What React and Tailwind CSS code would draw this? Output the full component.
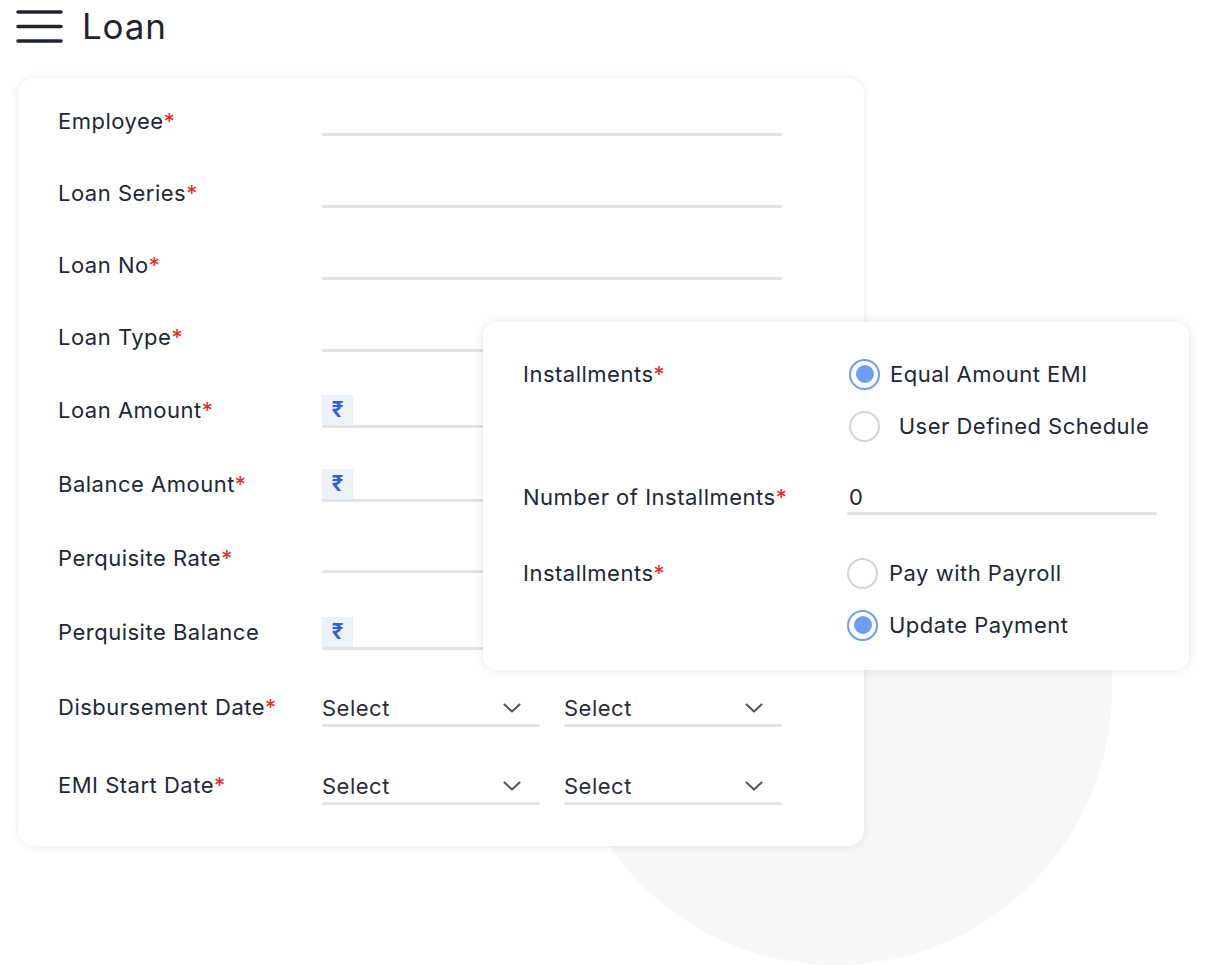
import React from 'react';

const font = { fontFamily: 'Inter, "Open Sans", sans-serif' };

const Star = () => <span className="text-[#e5251f]">*</span>;

const Chevron = () => (
    <svg width="18" height="10" viewBox="0 0 18 10" fill="none" className="text-[#555]">
        <path d="M1.5 1.5L9 8.5L16.5 1.5" stroke="currentColor" strokeWidth="2" strokeLinecap="round" strokeLinejoin="round" />
    </svg>
);

const Underline = () => <div className="h-[3px] rounded-full bg-[#e3e3e3]" />;

const Rupee = () => (
    <div className="w-[31px] h-[30px] bg-[#edf1fa] flex items-center justify-center text-[#2f62d3] text-[21px] font-bold">
        ₹
    </div>
);

// plain fields sit a little higher than the ones with a rupee box
const TextField = ({ rupee }) => (
    <div className="w-[460px] flex flex-col">
        {rupee ? (
            <div className="h-[30px] flex items-center"><Rupee /></div>
        ) : (
            <div className="h-[27px]" />
        )}
        <Underline />
    </div>
);

const SelectField = () => (
    <div className="w-[218px] flex flex-col">
        <div className="h-[32px] flex items-center justify-between pr-[19px]">
            <span className="text-[22px] tracking-[0.5px] text-[#2a2e38]">Select</span>
            <Chevron />
        </div>
        <Underline />
    </div>
);

const rows = [
    { label: 'Employee', req: true, h: 'h-[72px]' },
    { label: 'Loan Series', req: true, h: 'h-[72px]' },
    { label: 'Loan No', req: true, h: 'h-[72px]' },
    { label: 'Loan Type', req: true, h: 'h-[73px]' },
    { label: 'Loan Amount', req: true, rupee: true, h: 'h-[74px]' },
    { label: 'Balance Amount', req: true, rupee: true, h: 'h-[74px]' },
    { label: 'Perquisite Rate', req: true, h: 'h-[74px]' },
    { label: 'Perquisite Balance', rupee: true, h: 'h-[75px]' },
    { label: 'Disbursement Date', req: true, select: true, h: 'h-[78px]' },
    { label: 'EMI Start Date', req: true, select: true, h: 'h-[35px]' },
];

const Radio = ({ checked }) => (
    checked ? (
        <div className="w-[31px] h-[31px] rounded-full border-[2.5px] border-[#6c9df7] flex items-center justify-center shrink-0">
            <div className="w-[18px] h-[18px] rounded-full bg-[#6c9df7]" />
        </div>
    ) : (
        <div className="w-[31px] h-[31px] rounded-full border-2 border-[#d5d5d5] shrink-0" />
    )
);

const RadioItem = ({ checked, label, gap = 'gap-[11px]' }) => (
    <div className={`h-[32px] flex items-center ${gap}`}>
        <Radio checked={checked} />
        <span className="text-[22px] tracking-[0.5px] text-[#232734]">{label}</span>
    </div>
);

const labelCls = 'text-[22px] tracking-[0.5px] text-[#232734]';

const App = () => {
    return (
        <div className="relative w-[1208px] h-[965px] overflow-hidden bg-white" style={font}>
            {/* background circle */}
            <div className="absolute left-[560px] top-[413px] w-[552px] h-[552px] rounded-full bg-[#f7f7f7]" />

            {/* Header */}
            <div className="relative flex items-center h-[53px] pl-4 gap-[19px]">
                <svg width="47" height="33" viewBox="0 0 47 33" fill="none" className="text-[#1f2430]">
                    <path d="M2 2H45M2 16.5H45M2 31H45" stroke="currentColor" strokeWidth="3.5" strokeLinecap="round" />
                </svg>
                <h1 className="text-[35px] tracking-[0.8px] text-[#1f2430] leading-none">Loan</h1>
            </div>

            {/* Main form card */}
            <div className="relative mt-[25px] ml-[18px] w-[846px] bg-white rounded-[16px] shadow-[0_0_10px_rgba(0,0,0,0.09)] pt-[28px] pb-[41px] pl-[40px]">
                {rows.map((row) => (
                    <div key={row.label} className={`flex items-start ${row.h}`}>
                        <div className={`w-[264px] h-[30px] leading-[30px] ${labelCls}`}>
                            {row.label}
                            {row.req && <Star />}
                        </div>
                        {row.select ? (
                            <div className="flex gap-[24px]">
                                <SelectField />
                                <SelectField />
                            </div>
                        ) : (
                            <TextField rupee={row.rupee} />
                        )}
                    </div>
                ))}
            </div>

            {/* Installments popup */}
            <div className="absolute left-[483px] top-[322px] w-[706px] h-[348px] bg-white rounded-[14px] shadow-[0_0_12px_rgba(0,0,0,0.1)] pt-[36px] pl-[40px]">
                <div className="flex items-start">
                    <div className={`w-[324px] h-[32px] leading-[32px] ${labelCls}`}>
                        Installments<Star />
                    </div>
                    <div className="flex flex-col gap-[20px] ml-[2px]">
                        <RadioItem checked label="Equal Amount EMI" gap="gap-[10px]" />
                        <RadioItem label={'\u00a0User Defined Schedule'} gap="gap-[12px]" />
                    </div>
                </div>

                <div className="flex items-start mt-[40px]">
                    <div className={`w-[324px] h-[30px] leading-[30px] ${labelCls}`}>
                        Number of Installments<Star />
                    </div>
                    <div className="w-[310px] flex flex-col">
                        <div className={`h-[30px] flex items-center pl-[2px] ${labelCls}`}>0</div>
                        <Underline />
                    </div>
                </div>

                <div className="flex items-start mt-[42px]">
                    <div className={`w-[324px] h-[32px] leading-[32px] ${labelCls}`}>
                        Installments<Star />
                    </div>
                    <div className="flex flex-col gap-[20px]">
                        <RadioItem label="Pay with Payroll" />
                        <RadioItem checked label="Update Payment" />
                    </div>
                </div>
            </div>
        </div>
    );
};

export default App;
